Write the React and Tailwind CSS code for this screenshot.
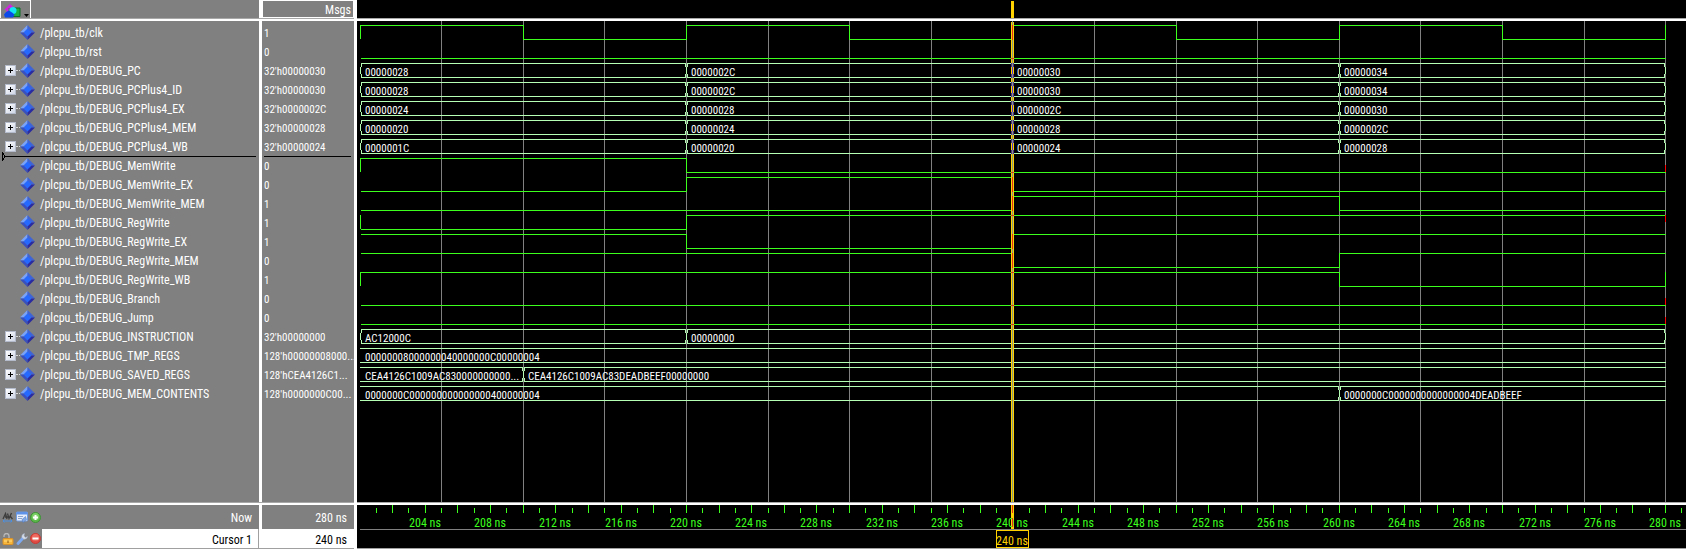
import React from "react";

const SIGNALS = [
  { name: "clk", value: "1", edges: [200, 210, 220, 230, 240, 250, 260, 270, 280], start: 1 },
  { name: "rst", value: "0", edges: [], start: 0 },
  { name: "DEBUG_PC", value: "32'h00000030", bus: [[200, "00000028"], [220, "0000002C"], [240, "00000030"], [260, "00000034"]], closed: true },
  { name: "DEBUG_PCPlus4_ID", value: "32'h00000030", bus: [[200, "00000028"], [220, "0000002C"], [240, "00000030"], [260, "00000034"]], closed: true },
  { name: "DEBUG_PCPlus4_EX", value: "32'h0000002C", bus: [[200, "00000024"], [220, "00000028"], [240, "0000002C"], [260, "00000030"]], closed: true },
  { name: "DEBUG_PCPlus4_MEM", value: "32'h00000028", bus: [[200, "00000020"], [220, "00000024"], [240, "00000028"], [260, "0000002C"]], closed: true },
  { name: "DEBUG_PCPlus4_WB", value: "32'h00000024", bus: [[200, "0000001C"], [220, "00000020"], [240, "00000024"], [260, "00000028"]], closed: true },
  { name: "DEBUG_MemWrite", value: "0", edges: [200, 220], start: 1, glitch: "low", insertion: true },
  { name: "DEBUG_MemWrite_EX", value: "0", edges: [220, 240], start: 0 },
  { name: "DEBUG_MemWrite_MEM", value: "1", edges: [240, 260], start: 0 },
  { name: "DEBUG_RegWrite", value: "1", edges: [200, 220], start: 0, glitch: "high" },
  { name: "DEBUG_RegWrite_EX", value: "1", edges: [220, 240], start: 1 },
  { name: "DEBUG_RegWrite_MEM", value: "0", edges: [240, 260], start: 1 },
  { name: "DEBUG_RegWrite_WB", value: "1", edges: [200, 260, 280], start: 1 },
  { name: "DEBUG_Branch", value: "0", edges: [], start: 0, glitch: "low" },
  { name: "DEBUG_Jump", value: "0", edges: [], start: 0, glitch: "low" },
  { name: "DEBUG_INSTRUCTION", value: "32'h00000000", bus: [[200, "AC12000C"], [220, "00000000"]], closed: true },
  { name: "DEBUG_TMP_REGS", value: "128'h00000008000...", bus: [[200, "00000008000000040000000C00000004"]] },
  { name: "DEBUG_SAVED_REGS", value: "128'hCEA4126C1...", bus: [[200, "CEA4126C1009AC830000000000..."], [210, "CEA4126C1009AC83DEADBEEF00000000"]] },
  { name: "DEBUG_MEM_CONTENTS", value: "128'h0000000C00...", bus: [[200, "0000000C000000000000000400000004"], [260, "0000000C0000000000000004DEADBEEF"]] },
];

const ROW = 19;
const CURSOR = 240;
const END = 280;
const GREEN = "#3cff1e";
const BUS = "#b4ffb4";
const GOLD = "#ffd200";
const timeToX = (t) => Math.floor(3 + (t - 200) * 16.32);

const HLine = ({ x1, x2, y, color }) => <rect x={x1} y={y} width={x2 - x1 + 1} height={1} fill={color} />;
const VLine = ({ x, y1, y2, color }) => <rect x={x} y={y1} width={1} height={y2 - y1 + 1} fill={color} />;

function BitWave({ signal, top }) {
  const low = top + 14;
  const parts = [];
  let level = signal.start;
  let from = timeToX(200) + 1;
  signal.edges.forEach((t) => {
    const x = timeToX(t);
    if (t > 200) {
      parts.push(<HLine key={"h" + t} x1={from} x2={x} y={level ? top : low} color={GREEN} />);
      level = 1 - level;
      from = x;
    }
    parts.push(<VLine key={"v" + t} x={x} y1={top} y2={t === 200 ? low - 1 : low} color={GREEN} />);
  });
  if (from < timeToX(END)) parts.push(<HLine key="last" x1={from} x2={timeToX(END)} y={level ? top : low} color={GREEN} />);
  if (signal.glitch) {
    const y = signal.glitch === "low" ? top + 7 : top;
    parts.push(<VLine key="glitch" x={timeToX(END)} y1={y} y2={y + 6} color="#ff0000" />);
  }
  return <g>{parts}</g>;
}

function BusWave({ signal, top }) {
  const low = top + 14;
  return (
    <g>
      {signal.bus.map(([t, label], i) => {
        const end = i + 1 < signal.bus.length ? signal.bus[i + 1][0] : END;
        const openLeft = i === 0 && !signal.closed;
        const openRight = end === END && !signal.closed;
        const x1 = timeToX(t) + (openLeft ? 0 : 1);
        const x2 = timeToX(end) - (openRight ? 0 : 1);
        return (
          <g key={t}>
            <HLine x1={x1} x2={x2} y={top} color={BUS} />
            <HLine x1={x1} x2={x2} y={low} color={BUS} />
            {!openLeft && (
              <>
                <VLine x={x1} y1={top} y2={top + 3} color={BUS} />
                <VLine x={x1 - 1} y1={top + 4} y2={top + 10} color={BUS} />
                <VLine x={x1} y1={top + 11} y2={low} color={BUS} />
              </>
            )}
            {!openRight && (
              <>
                <VLine x={x2} y1={top} y2={top + 3} color={BUS} />
                <VLine x={x2 + 1} y1={top + 4} y2={top + 10} color={BUS} />
                <VLine x={x2} y1={top + 11} y2={low} color={BUS} />
              </>
            )}
            <text x={timeToX(t) + 5} y={top + 13} fill="#ffffff">{label}</text>
          </g>
        );
      })}
    </g>
  );
}

function CursorLine() {
  const x = timeToX(CURSOR);
  return (
    <g>
      <rect x={x - 1} y={1} width={3} height="100%" fill={GOLD} />
      <rect x={x} y={0} width={1} height="100%" fill="#8a9a80" />
      {SIGNALS.map((s, i) => {
        const top = 4 + i * ROW;
        if (s.bus) {
          return s.bus.some(([t]) => t === CURSOR) ? (
            <g key={s.name}>
              <VLine x={x} y1={top + 4} y2={top + 10} color="#4b2fe0" />
              {[0, 11].map((d) => (
                <g key={d}>
                  <VLine x={x - 1} y1={top + d} y2={top + d + 3} color="#4b2d8a" />
                  <VLine x={x + 1} y1={top + d} y2={top + d + 3} color="#4b2d8a" />
                </g>
              ))}
            </g>
          ) : null;
        }
        if (s.edges.includes(CURSOR)) return <VLine key={s.name} x={x} y1={top} y2={top + 14} color="#e0301a" />;
        const level = s.edges.filter((t) => t > 200 && t < CURSOR).length % 2 ? 1 - s.start : s.start;
        return <HLine key={s.name} x1={x - 1} x2={x + 1} y={level ? top : top + 14} color="#e0301a" />;
      })}
    </g>
  );
}

function WaveCanvas() {
  return (
    <svg className="block h-full w-full text-[11px]" shapeRendering="crispEdges" role="img" aria-label="Waveforms">
      {Array.from({ length: 16 }, (_, i) => 205 + i * 5).map((t) => (
        <rect key={t} x={timeToX(t)} y={0} width={1} height="100%" fill="#808080" />
      ))}
      {SIGNALS.map((s, i) => {
        const Wave = s.bus ? BusWave : BitWave;
        return <Wave key={s.name} signal={s} top={4 + i * ROW} />;
      })}
      <CursorLine />
    </svg>
  );
}

function Timeline() {
  const x = timeToX(CURSOR);
  return (
    <svg className="block h-[43px] w-full" shapeRendering="crispEdges" role="img" aria-label="Timeline">
      <rect x={x - 1} y={0} width={3} height={24} fill={GOLD} />
      {Array.from({ length: 81 }, (_, i) => 201 + i).map((t) => (
        <VLine key={t} x={timeToX(t)} y1={t % 2 ? 3 : 0} y2={7} color={t === CURSOR ? "#e0301a" : GREEN} />
      ))}
      {Array.from({ length: 20 }, (_, i) => 204 + i * 4).map((t) => (
        <text key={t} x={timeToX(t)} y={22} textAnchor="middle" fill={GREEN}>{t} ns</text>
      ))}
      <VLine x={x} y1={13} y2={21} color="#e0301a" />
      <rect x={3} y={24} width="100%" height={1} fill="#808080" />
      <rect x={x - 16} y={25} width={33} height={18} fill={GOLD} />
      <rect x={x - 15} y={26} width={31} height={16} fill="#000000" />
      <text x={x} y={40} textAnchor="middle" fill={GOLD}>240 ns</text>
    </svg>
  );
}

const Diamond = () => (
  <svg width="15" height="15" viewBox="0 0 15 15" className="block shrink-0" aria-hidden="true">
    <path d="M7.5 0 0 7.5h7.5z" fill="#7aa2f6" />
    <path d="M7.5 0 15 7.5H7.5z" fill="#3f63d4" />
    <path d="M0 7.5 7.5 15V7.5z" fill="#3a50bd" />
    <path d="M15 7.5 7.5 15V7.5z" fill="#2a2ba0" />
    <path d="M7.5 3.5 11.5 7.5 7.5 11.5 3.5 7.5z" fill="#2569ff" />
  </svg>
);

const ExpandButton = ({ label }) => (
  <button aria-label={"Expand " + label} className="block h-[11px] w-[11px] border border-[#b4bccb] bg-linear-to-br from-white to-[#cfd6e6]">
    <svg width="9" height="9" viewBox="0 0 9 9" shapeRendering="crispEdges" className="block">
      <path d="M2 4h5v1H2zM4 2h1v5H4z" fill="#000" />
    </svg>
  </button>
);

const HRule = () => <div className="h-[3px] shrink-0 border-t border-[#a8a8a8] bg-white" />;

function SignalRow({ signal }) {
  const path = "/plcpu_tb/" + signal.name;
  return (
    <tr className="h-[19px]">
      <td className="relative p-0">
        {signal.insertion && (
          <svg className="absolute top-[-4px] left-[2px] h-[9px] w-[254px]" shapeRendering="crispEdges" aria-hidden="true">
            <path d="M0.5 1v7l3-3.5z" fill="none" stroke="#000" />
            <rect x="2" y="4" width="252" height="1" fill="#000" />
          </svg>
        )}
        <div className="flex h-[19px] items-center pl-[5px]">
          <div className="flex w-[15px] shrink-0 items-center">
            {signal.bus && (
              <>
                <ExpandButton label={path} />
                <span className="w-1 border-t border-dotted border-[#d8d8d8]" />
              </>
            )}
          </div>
          <Diamond />
          <span className="pt-[2px] pl-[5px]">{path}</span>
        </div>
      </td>
      <td className="relative border-l-[3px] border-white p-0 pt-[2px] pl-[2px] text-[11px] leading-[17px]">
        {signal.insertion && <span className="absolute top-0 left-[2px] h-px w-[87px] bg-black" />}
        {signal.value}
      </td>
    </tr>
  );
}

const iconButton = "block h-[12px] w-[12px]";

const AddIcon = () => (
  <svg width="11" height="11" viewBox="0 0 11 11" className="block">
    <circle cx="5.5" cy="5.5" r="5" fill="#5cb84a" stroke="#3f9436" />
    <circle cx="5.5" cy="4.5" r="3.5" fill="#7ccf67" />
    <path d="M5.5 3v5M3 5.5h5" stroke="#fff" strokeWidth="2" />
  </svg>
);
const RemoveIcon = () => (
  <svg width="11" height="11" viewBox="0 0 11 11" className="block">
    <circle cx="5.5" cy="5.5" r="5" fill="#e04c43" stroke="#c93a35" />
    <circle cx="5.5" cy="4.5" r="3.5" fill="#ee6a60" />
    <path d="M2.5 5.5h6" stroke="#fff" strokeWidth="2" />
  </svg>
);
const MeasureIcon = () => (
  <svg width="11" height="11" viewBox="0 0 11 11" className="block">
    <path d="M1 7 3.5 1.5 5 7M3 5h3M5.5 1.5 7 6.5 9.5 1M8 4l2.5 3" stroke="#3c3c3c" strokeWidth="1.3" fill="none" />
    <path d="M1 9h9M2.5 7.5 1 9l1.5 1.5M8.5 7.5 10 9l-1.5 1.5" stroke="#4b8fe0" fill="none" />
  </svg>
);
const SheetIcon = () => (
  <svg width="12" height="12" viewBox="0 0 12 12" className="block">
    <rect x="0.5" y="1" width="11" height="9" rx="1" fill="#e8eefb" stroke="#6f9be0" />
    <rect x="0.5" y="1" width="11" height="2.5" fill="#5f93ea" />
    <path d="M2 5.5h5M2 7.5h4" stroke="#8aa4cc" />
    <path d="M6 8.5 9.5 5.5l1 3L7 11.5z" fill="#7fa8e6" stroke="#4a74b8" strokeWidth="0.5" />
  </svg>
);
const LockIcon = () => (
  <svg width="12" height="12" viewBox="0 0 12 12" className="block">
    <path d="M2 4V3a2.5 2.5 0 0 1 5 0v3" fill="none" stroke="#b8b8b8" strokeWidth="1.3" />
    <rect x="1" y="5.5" width="10" height="6" rx="1" fill="#f6b73c" stroke="#d9912a" />
    <path d="M2 8h8" stroke="#ffdc83" />
    <rect x="5.5" y="7.5" width="1" height="2.5" fill="#8a5a12" />
  </svg>
);
const WrenchIcon = () => (
  <svg width="12" height="12" viewBox="0 0 12 12" className="block">
    <path d="M2 10.5 7 5" stroke="#7ca9ef" strokeWidth="2.8" strokeLinecap="round" />
    <path d="M8.5 0.5A3 3 0 0 0 6 4.5l1.5 1.5a3 3 0 0 0 4-2.5L9.5 4.5 8 3z" fill="#d5dbe5" stroke="#a5b3c9" strokeWidth="0.5" />
  </svg>
);

export default function App() {
  return (
    <main className="flex min-h-screen w-full bg-[#808080] text-[12px] leading-[19px] whitespace-nowrap text-white [font-family:'Roboto_Condensed','Liberation_Sans',sans-serif]">
      <section className="flex w-[357px] shrink-0 flex-col border-r-[3px] border-white">
        <header className="flex h-[18px] shrink-0">
          <div className="w-[259px]">
            <button aria-label="Signal display options" className="block h-[18px] w-[31px] border border-b-0 border-white">
              <svg width="29" height="17" viewBox="0 0 29 17" className="block">
                <path d="M12 7h7v8.5h-8z" fill="#18b040" stroke="#0c6d24" />
                <path d="M9 3 15.5 9H13v3H5.5V9H3z" fill="#d021e0" />
                <path d="M7 7h4v3H7z" fill="#8a5a90" />
                <circle cx="12" cy="9.5" r="3.5" fill="#14e4f4" />
                <path d="M3 13.5 5 11 8 9.5 11 11.5 13.5 13.5 12 16.5H4z" fill="#0a4ae8" />
                <path d="M23 13h5l-2.5 3z" fill="#000" />
              </svg>
            </button>
          </div>
          <div className="flex-1 border-l-[3px] border-white">
            <div className="h-[18px] border border-white pr-[2px] text-right">Msgs</div>
          </div>
        </header>
        <HRule />
        <div className="flex flex-1 flex-col">
          <table className="w-full table-fixed border-separate border-spacing-0" aria-label="Signals">
            <colgroup>
              <col className="w-[259px]" />
              <col />
            </colgroup>
            <tbody>
              <tr className="h-[2px]">
                <td className="p-0" />
                <td className="border-l-[3px] border-white p-0" />
              </tr>
              {SIGNALS.map((s) => (
                <SignalRow key={s.name} signal={s} />
              ))}
            </tbody>
          </table>
          <div className="ml-[259px] flex-1 border-l-[3px] border-white" />
        </div>
        <HRule />
        <footer className="shrink-0 border-b border-[#a0a0a0]">
          <div className="flex h-[24px]">
            <div className="flex w-[259px] items-center gap-[2px] pr-[7px] pl-[2px]">
              <button aria-label="Measure" className={iconButton}><MeasureIcon /></button>
              <button aria-label="Edit grid" className={iconButton}><SheetIcon /></button>
              <button aria-label="Add cursor" className={iconButton}><AddIcon /></button>
              <span className="flex-1 self-start text-right leading-[26px]">Now</span>
            </div>
            <div className="flex-1 border-l-[3px] border-white pr-[7px] text-right leading-[26px]">280 ns</div>
          </div>
          <div className="flex h-[19px]">
            <div className="flex w-[42px] items-center gap-[2px] pl-[2px]">
              <button aria-label="Lock cursor" className={iconButton}><LockIcon /></button>
              <button aria-label="Cursor properties" className={iconButton}><WrenchIcon /></button>
              <button aria-label="Delete cursor" className={iconButton}><RemoveIcon /></button>
            </div>
            <div className="w-[217px] border-r border-[#a0a0a0] bg-white pr-[6px] text-right leading-[22px] text-black">Cursor 1</div>
            <div className="flex-1 bg-white pr-[7px] text-right leading-[22px] text-black">240 ns</div>
          </div>
        </footer>
      </section>
      <section className="flex min-w-0 flex-1 flex-col overflow-hidden bg-black">
        <svg className="block h-[18px] w-full shrink-0" shapeRendering="crispEdges" aria-hidden="true">
          <rect x={timeToX(CURSOR) - 1} y={1} width={3} height={17} fill={GOLD} />
        </svg>
        <HRule />
        <div className="flex-1">
          <WaveCanvas />
        </div>
        <HRule />
        <div className="shrink-0 border-b border-[#a0a0a0]">
          <Timeline />
        </div>
      </section>
    </main>
  );
}
